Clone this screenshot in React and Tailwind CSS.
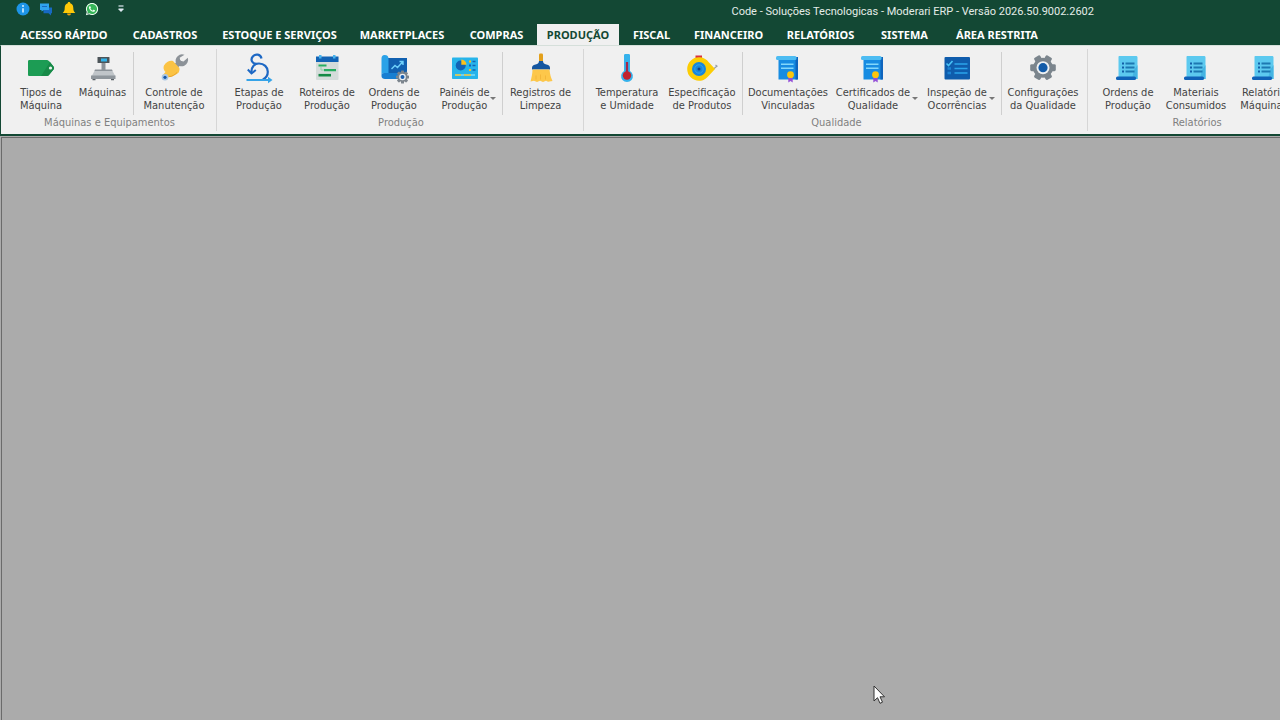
import { useState } from 'react';
import { FaWhatsapp } from 'react-icons/fa';

const Icon = ({ children }) => (
    <svg viewBox="0 0 28 28" className="w-7 h-7 shrink-0 overflow-visible" fill="none" aria-hidden="true">
        {children}
    </svg>
);

const GearShape = ({ cx, cy, r, teeth = 8, toothWidth, start = 0, color }) => (
    <g fill={color}>
        <circle cx={cx} cy={cy} r={r * 0.78} />
        {Array.from({ length: teeth }, (_, i) => (
            <rect
                key={i}
                x={cx - toothWidth / 2}
                y={cy - r}
                width={toothWidth}
                height={r}
                rx={toothWidth * 0.2}
                transform={`rotate(${start + (360 / teeth) * i} ${cx} ${cy})`}
            />
        ))}
    </g>
);

const TagIcon = () => (
    <Icon>
        <path d="M2.5 6H19c1.5 0 2.300.4 3.200 1.300l4.300 5.100c.8 1 .8 2.200 0 3.200l-4.300 5.100c-.9 1-1.700 1.300-3.200 1.300H2.500C1.500 22 1 21.500 1 20.500v-13C1 6.500 1.500 6 2.500 6z" fill="#1c9c54" />
        <path d="M14 22l9-14 3.500 4.400c.8 1 .8 2.200 0 3.200l-4.300 5.100c-.9 1-1.700 1.300-3.200 1.300z" fill="#178a48" />
        <circle cx="23.500" cy="14" r="1.600" fill="#e8f5ec" />
    </Icon>
);

const ScaleIcon = () => (
    <Icon>
        <rect x="12.500" y="8" width="4" height="9" fill="#8b9298" />
        <rect x="8.500" y="3" width="12" height="6" rx="0.600" fill="#4c5459" />
        <rect x="12" y="4.500" width="6" height="3" fill="#31b3ea" />
        <path d="M6 16h17l3.500 6.500h-24z" fill="#c0c5c9" />
        <path d="M6 15.500h17l.500 1.500H5.500z" fill="#8b9298" />
        <path d="M2 21.500h24.500V25H2z" fill="#8f969c" />
        <path d="M3.500 25h3v1.200h-3zM22 25h3v1.200h-3z" fill="#596066" />
    </Icon>
);

const WrenchIcon = () => (
    <Icon>
        <path d="M12 16l9-9" stroke="#8c9298" strokeWidth="5" />
        <path d="M24.500.8a6.500 6.500 0 0 0-8.500 8.200 6.500 6.500 0 0 0 11.800-5.300l-4.300 3.800-3.200-.8-.6-3z" fill="#8c9298" />
        <path d="M4 11.500C6 8 10 6 13 7l6 6.500c1 1 .500 3.500-.5 5.300-3 2-5 3.500-8.500 4.200-3 1-5.500.5-7.500-1.500l3-3.500c-2-2-2.500-4.500-1.500-6.500z" fill="#fbc344" />
        <path d="M9 22.500c3 .5 6-2 8-4" stroke="#e9a42b" strokeWidth="1" />
        <circle cx="5" cy="23.300" r="3.300" fill="#a9c7e6" />
        <circle cx="5" cy="23.300" r="1.600" fill="#1557a8" />
    </Icon>
);

const SprintIcon = () => (
    <Icon>
        <path d="M16.500 4.500C15.500 0 10.500-.5 7.800 2.500c-2.800 3.300-.5 7.500 4 7.500" stroke="#1d68c4" strokeWidth="2.200" />
        <path d="M6.500 18.500C6 13 9.500 9.500 14 9.500c5 0 8.800 3.500 8.800 8.300 0 3.500-1.800 6.200-5 7.700" stroke="#1d68c4" strokeWidth="2.200" />
        <path d="M2.800 15.500l3.700 4 4.300-3.500" stroke="#1d68c4" strokeWidth="2" />
        <path d="M1.500 26h24" stroke="#35a3e8" strokeWidth="2" />
        <path d="M23 22.700l4.500 3.300-4.500 3.300z" fill="#35a3e8" />
    </Icon>
);

const CalendarIcon = () => (
    <Icon>
        <rect x="3" y="3" width="22.500" height="23" rx="1" fill="#d5dcda" />
        <path d="M3 2.500h22.500V8H3z" fill="#1263b5" />
        <path d="M6 1h2.500v3.500H6zM20 1h2.500v3.500H20z" fill="#46b3ee" />
        <path d="M5.500 11.500h8M11 16.200h12" stroke="#27ae60" strokeWidth="2.200" />
        <path d="M5.500 21.200h12.500" stroke="#148a45" strokeWidth="2.600" />
        <path d="M8 13v3h3" stroke="#8ed0a8" />
    </Icon>
);

const BlueprintIcon = () => (
    <Icon>
        <path d="M6 4h21v18H6z" fill="#1160b0" />
        <path d="M4.500 1C7.500 1 8.500 2.500 8.500 5v14H4c-1.500 0-2.500 1.500-2.500 3V4.500C1.500 2.500 2.500 1 4.500 1z" fill="#2ba2e8" />
        <path d="M4 19h15v6H5c-2 0-3.500-1-3.500-3S2.500 19 4 19z" fill="#187fd2" />
        <path d="M11.500 15l3.500-3.500 2.500 2 5-5.500M19.500 7.500h3.500V11" stroke="#6fd0fa" strokeWidth="1.400" />
        <GearShape cx={22.5} cy={23} r={6.5} toothWidth={3} color="#7c858d" />
        <circle cx="22.500" cy="23" r="3.300" fill="#edf1f4" />
        <circle cx="22.500" cy="23" r="2" fill="#1a5fae" />
    </Icon>
);

const DashboardIcon = () => (
    <Icon>
        <rect x="1" y="3.500" width="26" height="21.500" rx="0.800" fill="#27b4ea" />
        <circle cx="9.700" cy="11.500" r="5" fill="#1263b5" />
        <path d="M10.300 10.800V5.600a5.200 5.200 0 0 1 5.200 5.200z" fill="#fcc11a" />
        <path d="M18 7.500h2M18 16h2" stroke="#fcc11a" strokeWidth="1.800" />
        <path d="M21.500 7.500h3M21.500 11.500h3M21.500 16h3" stroke="#1263b5" strokeWidth="1.600" />
        <path d="M18 11.500h2" stroke="#1263b5" strokeWidth="1.800" />
        <path d="M4 21h20" stroke="#7fdcfa" strokeWidth="1.500" />
        <path d="M4 21h6M13 21h7" stroke="#e9c33a" strokeWidth="1.500" />
    </Icon>
);

const BroomIcon = () => (
    <Icon>
        <rect x="12" y="-0.500" width="4" height="10" rx="1.200" fill="#e3a01b" />
        <path d="M12 7h4c0 2 1 3 3.500 3.500 2.500.5 3.500 1.500 3.500 3.500v1.500H5V14c0-2 1-3 3.500-3.500C11 10 12 9 12 7z" fill="#1557a0" />
        <path d="M5.500 15.500h17c.5 4.500 1.300 8 3 11.500l-4.500.8-2-1-3 1.200-3-1.200-3 1.200-3-1.200-3.500.8c1-4 2-8 2-12.100z" fill="#fdc74a" />
        <path d="M9 21.500v4M13.500 20.500v5M18.500 21.500v4" stroke="#f0b136" strokeWidth="0.800" />
    </Icon>
);

const ThermometerIcon = () => (
    <Icon>
        <path d="M11 1.500c0-1 .5-1.500 1.500-1.500h3c1 0 1.500.5 1.500 1.500V17a5.900 5.900 0 1 1-6 0z" fill="#35b2ec" />
        <path d="M14 8v13" stroke="#a5274a" strokeWidth="2.200" />
        <circle cx="14" cy="21.500" r="4.200" fill="#c2242f" />
    </Icon>
);

const TapeIcon = () => (
    <Icon>
        <path d="M7.500 1.500h6.500V5H7.500z" fill="#d8323c" />
        <path d="M25 15.500l4-3.500M27.500 11l2 1.500" stroke="#9aa1a6" strokeWidth="1.200" />
        <path d="M11 3.200c4.500 0 7.500 2 10 5.300l6 6.500-6 6.500c-2.500 3-5.500 5.300-10 5.300a11.800 11.800 0 0 1 0-23.600z" fill="#fccd04" />
        <circle cx="11" cy="15" r="7" fill="#1687dc" />
        <circle cx="11" cy="15" r="4.200" stroke="#3ba8ee" strokeWidth="0.800" />
        <circle cx="11" cy="15" r="1.500" fill="#123f82" />
    </Icon>
);

const CertificateIcon = () => (
    <Icon>
        <path d="M4.500 3h19v22.500h-19z" fill="#178ce2" />
        <path d="M21.500 3H24v22.500h-2.500z" fill="#0f65bd" />
        <rect x="2" y="2" width="20.500" height="4" rx="1.500" fill="#4dbcf2" />
        <path d="M7 10.300h12.500M7 14.300h12.500" stroke="#82d7fb" strokeWidth="1.500" />
        <path d="M14.300 21h4.400v7.500l-2.200-1.500-2.200 1.500z" fill="#9450d8" />
        <circle cx="16.500" cy="20.700" r="3.400" fill="#fcc60d" />
    </Icon>
);

const ChecklistIcon = () => (
    <Icon>
        <rect x="1.500" y="3" width="25.500" height="22.500" rx="1" fill="#0f5cac" />
        <path d="M3.500 9.500l2 2 4-4.500" stroke="#48c1f5" strokeWidth="1.600" />
        <path d="M11.500 10h13M11.500 14.500h13M11.500 19h13" stroke="#2ba4ea" strokeWidth="1.700" />
        <path d="M4.500 14.500h3.500M4.500 19h3.500" stroke="#1c83d4" strokeWidth="2.500" />
    </Icon>
);

const SettingsIcon = () => (
    <Icon>
        <GearShape cx={14} cy={13.7} r={12.8} teeth={6} toothWidth={7} start={30} color="#7b858d" />
        <circle cx="14" cy="13.700" r="6.500" fill="#eef1f3" />
        <circle cx="14" cy="13.700" r="4.600" fill="#125ba8" />
    </Icon>
);

const ReportIcon = () => (
    <Icon>
        <path d="M5.500 2h16.500c1 0 1.500.5 1.500 1.500V25H4.500V3c0-.6.400-1 1-1z" fill="#5cc9ef" />
        <path d="M20 16l3.500-5v14H18z" fill="#45b4e2" />
        <path d="M8 9.500h2M8 13.500h2M8 17.500h2" stroke="#125fa8" strokeWidth="1.800" />
        <path d="M11.500 9.500h9M11.500 13.500h9M11.500 17.500h9" stroke="#1d79b2" strokeWidth="1.800" />
        <rect x="2" y="22.500" width="20" height="3.500" rx="1.500" fill="#1062b8" />
    </Icon>
);

const TABS = [
    { name: 'ACESSO RÁPIDO', width: 'w-[110px]' },
    { name: 'CADASTROS', width: 'w-[92px]' },
    { name: 'ESTOQUE E SERVIÇOS', width: 'w-[137px]' },
    { name: 'MARKETPLACES', width: 'w-[108px]' },
    { name: 'COMPRAS', width: 'w-[81px]' },
    { name: 'PRODUÇÃO', width: 'w-[82px]' },
    { name: 'FISCAL', width: 'w-[65px]' },
    { name: 'FINANCEIRO', width: 'w-[89px]' },
    { name: 'RELATÓRIOS', width: 'w-[95px]' },
    { name: 'SISTEMA', width: 'w-[73px]' },
    { name: 'ÁREA RESTRITA', width: 'w-[112px]' },
];

const GROUPS = [
    {
        title: 'Máquinas e Equipamentos',
        padding: 'pl-[9px] pr-[2px]',
        items: [
            { lines: ['Tipos de', 'Máquina'], icon: TagIcon, width: 'w-[62px]' },
            { lines: ['Máquinas'], icon: ScaleIcon, width: 'w-[61px]' },
            { separator: true },
            { lines: ['Controle de', 'Manutenção'], icon: WrenchIcon, width: 'w-[80px]' },
        ],
    },
    {
        title: 'Produção',
        padding: 'pl-[8px] pr-[5px]',
        items: [
            { lines: ['Etapas de', 'Produção'], icon: SprintIcon, width: 'w-[68px]' },
            { lines: ['Roteiros de', 'Produção'], icon: CalendarIcon, width: 'w-[68px]' },
            { lines: ['Ordens de', 'Produção'], icon: BlueprintIcon, width: 'w-[66px]' },
            { lines: ['Painéis de', 'Produção'], icon: DashboardIcon, width: 'w-[75px]', menu: true },
            { separator: true },
            { lines: ['Registros de', 'Limpeza'], icon: BroomIcon, width: 'w-[75px]' },
        ],
    },
    {
        title: 'Qualidade',
        padding: 'pl-[8px] pr-[3px]',
        items: [
            { lines: ['Temperatura', 'e Umidade'], icon: ThermometerIcon, width: 'w-[70px]' },
            { lines: ['Especificação', 'de Produtos'], icon: TapeIcon, width: 'w-[80px]' },
            { separator: true },
            { lines: ['Documentações', 'Vinculadas'], icon: CertificateIcon, width: 'w-[90px]' },
            { lines: ['Certificados de', 'Qualidade'], icon: CertificateIcon, width: 'w-[91px] pr-[11px]', menu: true },
            { lines: ['Inspeção de', 'Ocorrências'], icon: ChecklistIcon, width: 'w-[77px] pr-[11px]', menu: true },
            { separator: true },
            { lines: ['Configurações', 'da Qualidade'], icon: SettingsIcon, width: 'w-[82px]' },
        ],
    },
    {
        title: 'Relatórios',
        padding: 'pl-[6px] pr-[6px]',
        items: [
            { lines: ['Ordens de', 'Produção'], icon: ReportIcon, width: 'w-[68px]' },
            { lines: ['Materiais', 'Consumidos'], icon: ReportIcon, width: 'w-[68px]' },
            { lines: ['Relatório', 'Máquinas'], icon: ReportIcon, width: 'w-[68px]' },
        ],
    },
];

function QuickAccess() {
    return (
        <div className="flex items-center gap-[9px] pl-[16px] pt-[2px] self-start">
            <button type="button" aria-label="Informações">
                <svg viewBox="0 0 14 14" className="w-[14px] h-[14px]">
                    <circle cx="7" cy="7" r="6.500" fill="#1d95e8" />
                    <path d="M7 6.200v4.300" stroke="#d9f0ff" strokeWidth="1.600" />
                    <circle cx="7" cy="4" r="1" fill="#d9f0ff" />
                </svg>
            </button>
            <button type="button" aria-label="Mensagens">
                <svg viewBox="0 0 14 14" className="w-[14px] h-[14px]">
                    <path d="M4.500 5.500H13v5.800h-1V13.500L9.500 11.300h-5z" fill="#1769c2" />
                    <path d="M1 1.500h9V8H5L2.500 9.500V8H1z" fill="#2fa3ee" />
                    <path d="M3 4.500h5" stroke="#1769c2" />
                </svg>
            </button>
            <button type="button" aria-label="Notificações">
                <svg viewBox="0 0 14 14" className="w-[14px] h-[14px]">
                    <path d="M7 0c.8 0 1.300.5 1.300 1.300C10.500 2 11.300 3.800 11.300 6c0 2.500.7 3.800 2 5H.7c1.300-1.200 2-2.500 2-5 0-2.200.8-4 3-4.700C5.700.5 6.200 0 7 0z" fill="#ffc908" />
                    <path d="M5 11.500h4a2 2 0 0 1-4 0z" fill="#f0a30a" />
                </svg>
            </button>
            <button type="button" aria-label="WhatsApp">
                <svg viewBox="0 0 14 14" className="w-[14px] h-[14px]">
                    <circle cx="7.200" cy="6.800" r="5.800" fill="#35b558" />
                    <FaWhatsapp size={14} color="#f0fff4" />
                </svg>
            </button>
            <button type="button" aria-label="Personalizar barra de acesso rápido" className="ml-[9px]">
                <svg viewBox="0 0 8 8" className="w-[8px] h-[8px]">
                    <path d="M1.500 1h5" stroke="#dfe9f2" strokeWidth="1.200" />
                    <path d="M1.500 3.500h5v1L4 7 1.500 4.500z" fill="#dfe9f2" />
                </svg>
            </button>
        </div>
    );
}

function RibbonButton({ item }) {
    const ItemIcon = item.icon;
    return (
        <button type="button" className={`relative shrink-0 flex flex-col items-center pt-2 hover:bg-[#dde7e2] ${item.width}`}>
            <ItemIcon />
            <span className="mt-1 text-[11px] leading-[13px] text-[#444444] whitespace-nowrap text-center">
                {item.lines.map((line) => (
                    <span key={line} className="block">{line}</span>
                ))}
            </span>
            {item.menu && (
                <span className="absolute right-[6px] bottom-[15px] border-x-[3px] border-x-transparent border-t-[3px] border-t-[#777777]" />
            )}
        </button>
    );
}

function RibbonGroup({ group }) {
    return (
        <section className="shrink-0 flex" aria-label={group.title}>
            <div>
                <div className={`flex h-[69px] ${group.padding}`}>
                    {group.items.map((item, i) =>
                        item.separator ? (
                            <div key={i} className="w-px bg-[#cfcfcf] mt-[6px] shrink-0" />
                        ) : (
                            <RibbonButton key={i} item={item} />
                        )
                    )}
                </div>
                <h2 className="text-[11px] leading-4 pl-[2px] text-[#808080] text-center">{group.title}</h2>
            </div>
            <div className="w-px bg-[#d6d6d6] mt-[3px] mb-[3px]" />
        </section>
    );
}

export default function App() {
    const [activeTab, setActiveTab] = useState('PRODUÇÃO');

    return (
        <div className="h-screen flex flex-col overflow-hidden bg-[#ababab] select-none font-['DejaVu_Sans_Condensed','DejaVu_Sans',sans-serif]">
            <header className="bg-[#134834] shrink-0">
                <div className="flex h-6 items-center">
                    <QuickAccess />
                    <h1 className="ml-auto pr-[186px] font-['Roboto','Open_Sans',sans-serif] text-[11px] leading-6 text-[#e4ece8] whitespace-nowrap">
                        Code - Soluções Tecnologicas - Moderari ERP - Versão 2026.50.9002.2602
                    </h1>
                </div>
                <nav className="flex h-[21px] pl-[9px] font-['Noto_Sans','Open_Sans',sans-serif]">
                    {TABS.map((tab) => (
                        <button
                            key={tab.name}
                            type="button"
                            onClick={() => setActiveTab(tab.name)}
                            className={`shrink-0 text-[11px] leading-5 font-bold whitespace-nowrap ${tab.width} ${
                                activeTab === tab.name ? 'bg-[#f0f0f0] text-[#134834]' : 'text-white'
                            }`}
                        >
                            {tab.name}
                        </button>
                    ))}
                </nav>
            </header>

            <div className="shrink-0 flex h-[91px] bg-[#f0f0f0] border-l border-l-[#134834] border-b-2 border-b-[#134834] border-t border-t-[#d5dfda] overflow-hidden">
                {GROUPS.map((group) => (
                    <RibbonGroup key={group.title} group={group} />
                ))}
            </div>

            <main className="flex-1 mt-px ml-px border-l border-t border-[#6b6b6b]" />

            <svg viewBox="0 0 12 19" className="absolute left-[873px] top-[685px] w-[12px] h-[19px]" aria-hidden="true">
                <path d="M1 1v15l3.500-3.300L7 18.300l2.500-1.100L7 11.800h4.500z" fill="#fff" stroke="#333" strokeWidth="1" />
            </svg>
        </div>
    );
}
